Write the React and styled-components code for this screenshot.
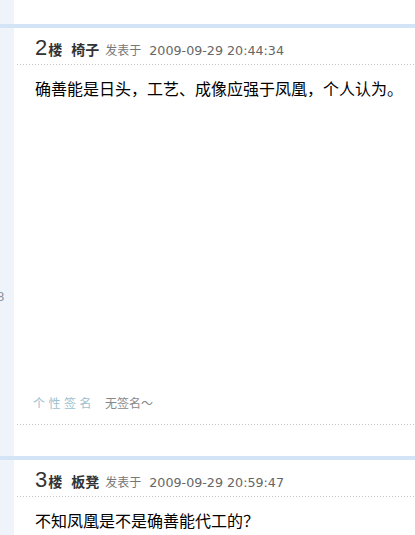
import React from "react";
import styled, { createGlobalStyle } from "styled-components";

const GlobalStyle = createGlobalStyle`
  html, body {
    margin: 0;
    padding: 0;
    background: #fff;
  }
  body {
    font-family: "Liberation Sans", "Noto Sans CJK SC", sans-serif;
    overflow: hidden;
  }
`;

const Page = styled.div`
  width: 415px;
  height: 535px;
  overflow: hidden;
`;

const Row = styled.div`
  display: grid;
  grid-template-columns: 14px 1fr;
  min-height: ${(p) => p.$height || 0}px;
`;

const Side = styled.div`
  background: #eff4fa;
  overflow: hidden;
`;

const SideNum = styled.div`
  margin-top: ${(p) => p.$top}px;
  margin-left: -3px;
  font-size: 13px;
  color: #8a8f99;
  line-height: 14px;
`;

const Main = styled.div`
  padding-left: 3px;
  min-width: 0;
`;

const Bar = styled.div`
  height: 4px;
  background: #d3e4f6;
`;

const dotted = `
  background-image: linear-gradient(to right, #c4c4c4 1px, transparent 1px);
  background-size: 3px 1px;
  background-repeat: repeat-x;
  background-position: left bottom;
`;

const Header = styled.div`
  display: flex;
  align-items: baseline;
  height: 37px;
  padding-left: 18px;
  padding-top: 2px;
  box-sizing: border-box;
  line-height: 36px;
  ${dotted}
  color: #333;
  white-space: nowrap;
`;

const Floor = styled.span`
  font-family: "Liberation Sans", sans-serif;
  font-size: 22px;
  color: #333;
`;

const FloorUnit = styled.span`
  font-family: "Noto Sans CJK SC", sans-serif;
  font-size: 14px;
  font-weight: bold;
  margin-left: 1px;
`;

const Author = styled.span`
  font-family: "Noto Sans CJK SC", sans-serif;
  font-size: 14px;
  font-weight: bold;
  margin-left: 9px;
  color: #333;
`;

const PostedAt = styled.span`
  font-family: "Noto Sans CJK SC", sans-serif;
  font-size: 12px;
  color: #777;
  margin-left: 6px;
`;

const Time = styled.span`
  font-family: "DejaVu Sans", sans-serif;
  font-size: 12.7px;
  color: #666;
  margin-left: 8px;
`;

const Body = styled.div`
  padding: 11px 0 0 18px;
  min-height: ${(p) => p.$min || 0}px;
  box-sizing: border-box;
  font-family: "Noto Sans CJK SC", sans-serif;
  font-size: 16px;
  line-height: 24px;
  color: #000;
  white-space: nowrap;
`;

const Signature = styled.div`
  display: flex;
  align-items: center;
  padding: 0 0 12px 16px;
  height: 34px;
  box-sizing: border-box;
  ${dotted}
  font-family: "Noto Sans CJK SC", sans-serif;
  font-size: 12px;
`;

const SigLabel = styled.span`
  color: #9cc0cf;
  letter-spacing: 3.5px;
`;

const SigText = styled.span`
  color: #888;
  margin-left: 10px;
`;

const Spacer = styled.div`
  height: ${(p) => p.$h}px;
`;

function PostHeader({ floor, author, time }) {
  return (
    <Header>
      <Floor>{floor}</Floor>
      <FloorUnit>楼</FloorUnit>
      <Author>{author}</Author>
      <PostedAt>发表于</PostedAt>
      <Time>{time}</Time>
    </Header>
  );
}

export default function App() {
  return (
    <Page>
      <GlobalStyle />
      <Row $height={24}>
        <Side />
        <Main />
      </Row>
      <Bar />
      <Row>
        <Side>
          <SideNum $top={262}>8</SideNum>
        </Side>
        <Main>
          <PostHeader floor="2" author="椅子" time="2009-09-29 20:44:34" />
          <Body $min={326}>确善能是日头，工艺、成像应强于凤凰，个人认为。</Body>
          <Signature>
            <SigLabel>个性签名</SigLabel>
            <SigText>无签名～</SigText>
          </Signature>
          <Spacer $h={31} />
        </Main>
      </Row>
      <Bar />
      <Row $height={80}>
        <Side />
        <Main>
          <PostHeader floor="3" author="板凳" time="2009-09-29 20:59:47" />
          <Body>不知凤凰是不是确善能代工的？</Body>
        </Main>
      </Row>
    </Page>
  );
}
